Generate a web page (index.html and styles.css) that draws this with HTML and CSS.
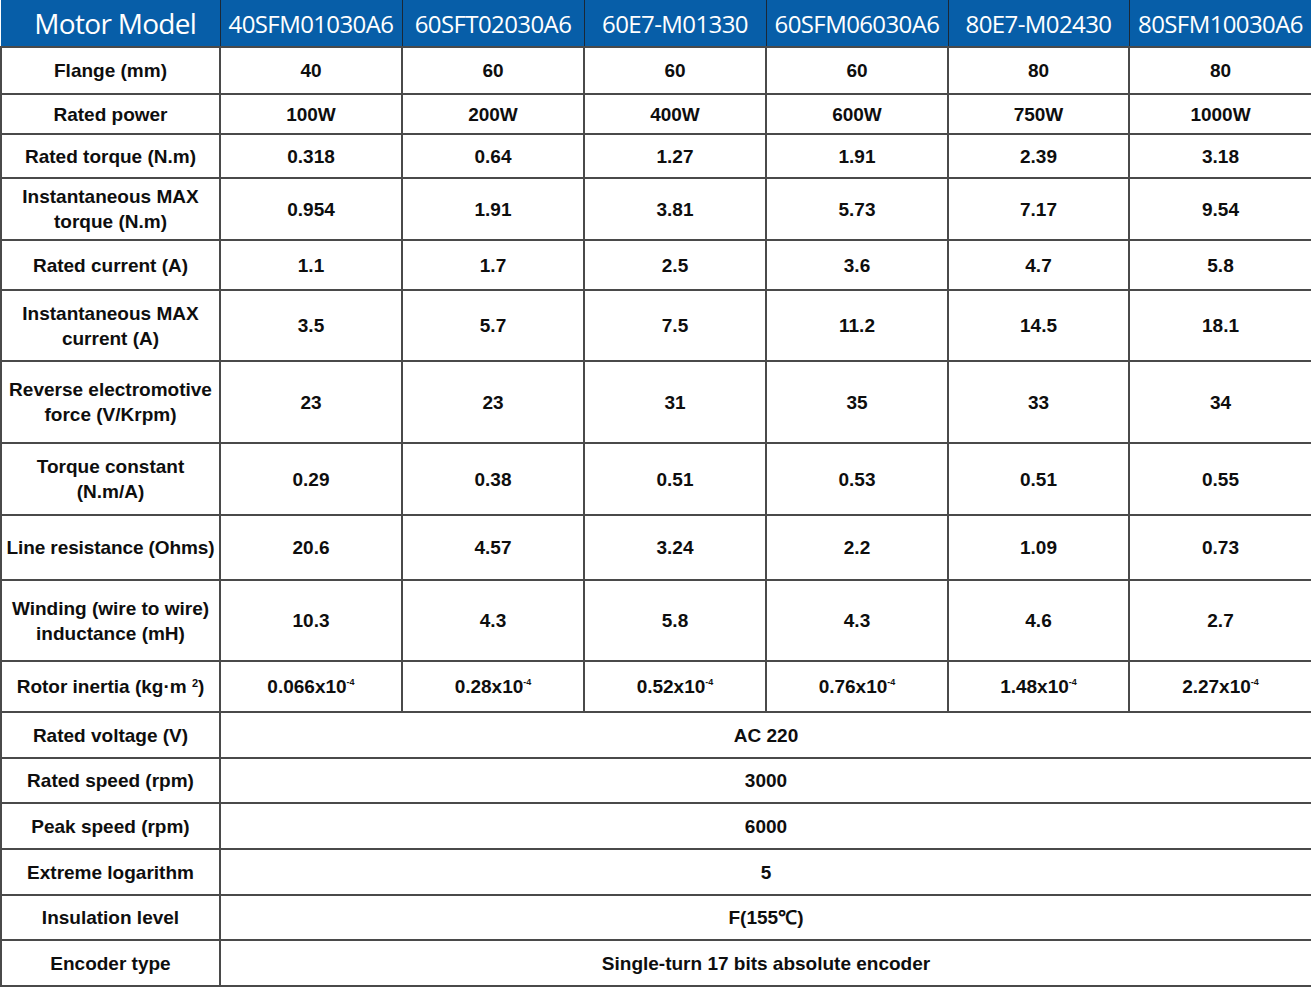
FILE: index.html
```html
<!DOCTYPE html>
<html>
<head>
<meta charset="utf-8">
<link rel="stylesheet" href="styles.css">
</head>
<body>
<table class="spec">
<colgroup>
<col class="c-label"><col class="c-a"><col class="c-a"><col class="c-a"><col class="c-a"><col class="c-b"><col class="c-last">
</colgroup>
<thead>
<tr class="h47">
<th class="model-title">Motor Model</th>
<th>40SFM01030A6</th>
<th>60SFT02030A6</th>
<th>60E7-M01330</th>
<th>60SFM06030A6</th>
<th>80E7-M02430</th>
<th>80SFM10030A6</th>
</tr>
</thead>
<tbody>
<tr class="h47"><td>Flange (mm)</td><td>40</td><td>60</td><td>60</td><td>60</td><td>80</td><td>80</td></tr>
<tr class="h40"><td>Rated power</td><td>100W</td><td>200W</td><td>400W</td><td>600W</td><td>750W</td><td>1000W</td></tr>
<tr class="h44"><td>Rated torque (N.m)</td><td>0.318</td><td>0.64</td><td>1.27</td><td>1.91</td><td>2.39</td><td>3.18</td></tr>
<tr class="h62"><td>Instantaneous MAX<br>torque (N.m)</td><td>0.954</td><td>1.91</td><td>3.81</td><td>5.73</td><td>7.17</td><td>9.54</td></tr>
<tr class="h50"><td>Rated current (A)</td><td>1.1</td><td>1.7</td><td>2.5</td><td>3.6</td><td>4.7</td><td>5.8</td></tr>
<tr class="h71"><td>Instantaneous MAX<br>current (A)</td><td>3.5</td><td>5.7</td><td>7.5</td><td>11.2</td><td>14.5</td><td>18.1</td></tr>
<tr class="h82"><td>Reverse electromotive<br>force (V/Krpm)</td><td>23</td><td>23</td><td>31</td><td>35</td><td>33</td><td>34</td></tr>
<tr class="h72"><td>Torque constant<br>(N.m/A)</td><td>0.29</td><td>0.38</td><td>0.51</td><td>0.53</td><td>0.51</td><td>0.55</td></tr>
<tr class="h65"><td class="tight">Line resistance (Ohms)</td><td>20.6</td><td>4.57</td><td>3.24</td><td>2.2</td><td>1.09</td><td>0.73</td></tr>
<tr class="h81"><td>Winding (wire to wire)<br>inductance (mH)</td><td>10.3</td><td>4.3</td><td>5.8</td><td>4.3</td><td>4.6</td><td>2.7</td></tr>
<tr class="h51"><td>Rotor inertia (kg·m <sup class="sq">2</sup>)</td><td>0.066x10<sup>-4</sup></td><td>0.28x10<sup>-4</sup></td><td>0.52x10<sup>-4</sup></td><td>0.76x10<sup>-4</sup></td><td>1.48x10<sup>-4</sup></td><td>2.27x10<sup>-4</sup></td></tr>
<tr class="h46"><td>Rated voltage (V)</td><td colspan="6">AC 220</td></tr>
<tr class="h45"><td>Rated speed (rpm)</td><td colspan="6">3000</td></tr>
<tr class="h46"><td>Peak speed (rpm)</td><td colspan="6">6000</td></tr>
<tr class="h46"><td>Extreme logarithm</td><td colspan="6">5</td></tr>
<tr class="h45"><td>Insulation level</td><td colspan="6">F(155℃)</td></tr>
<tr class="h46"><td>Encoder type</td><td colspan="6">Single-turn 17 bits absolute encoder</td></tr>
</tbody>
</table>
</body>
</html>
```
FILE: styles.css
```css
html, body {
  margin: 0;
  padding: 0;
  background: #ffffff;
}

.spec {
  border-collapse: collapse;
  table-layout: fixed;
  width: 1311px;
  font-family: "Liberation Sans", Arial, sans-serif;
  font-weight: bold;
  font-size: 19px;
  color: #0e0e0e;
}

.c-label { width: 219px; }
.c-a { width: 182px; }
.c-b { width: 181px; }
.c-last { width: 183px; }

.spec th {
  background: #075ea8;
  color: #ffffff;
  font-family: "Open Sans", "Noto Sans", sans-serif;
  font-weight: normal;
  font-size: 24px;
  letter-spacing: -0.6px;
  white-space: nowrap;
  border: 1px solid #1b2836;
  border-top: 0;
  padding: 0;
  text-align: center;
  vertical-align: middle;
  overflow: hidden;
}

.spec th.model-title {
  font-size: 28px;
  letter-spacing: -0.7px;
  border-left: 0;
  padding-left: 10px;
}

.spec td {
  border: 2px solid #4a4a4a;
  padding: 0;
  text-align: center;
  vertical-align: middle;
  line-height: 25px;
  white-space: nowrap;
}

.spec td.tight {
  letter-spacing: -0.1px;
}

.spec sup {
  font-size: 9px;
  line-height: 0;
  vertical-align: 8px;
}

.spec sup.sq {
  font-size: 11px;
  vertical-align: 6px;
}

.h40 { height: 40px; }
.h44 { height: 44px; }
.h45 { height: 45px; }
.h46 { height: 46px; }
.h47 { height: 47px; }
.h50 { height: 50px; }
.h51 { height: 51px; }
.h62 { height: 62px; }
.h65 { height: 65px; }
.h71 { height: 71px; }
.h72 { height: 72px; }
.h81 { height: 81px; }
.h82 { height: 82px; }
```
